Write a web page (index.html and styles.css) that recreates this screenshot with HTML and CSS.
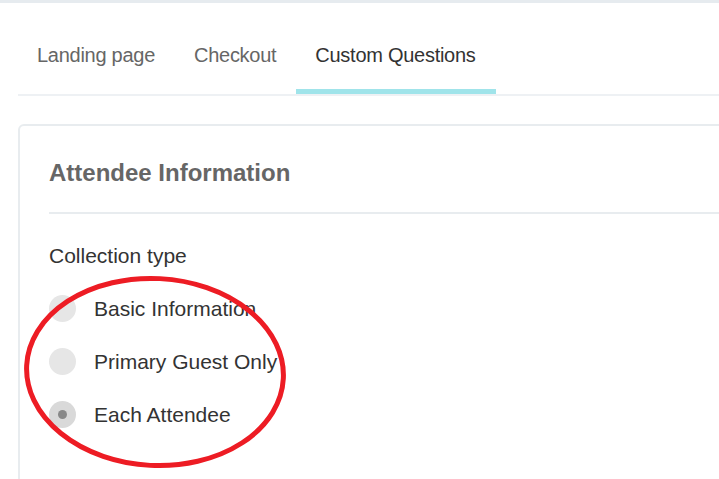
FILE: index.html
```html
<!DOCTYPE html>
<html>
<head>
<meta charset="utf-8">
<link rel="stylesheet" href="styles.css">
</head>
<body>
<div class="topbar"></div>
<div class="page">
  <nav class="tabs">
    <a class="tab">Landing page</a>
    <a class="tab">Checkout</a>
    <a class="tab active">Custom Questions</a>
  </nav>
  <section class="card">
    <h2 class="card-title">Attendee Information</h2>
    <div class="card-body">
      <div class="field-label">Collection type</div>
      <div class="radios">
        <label class="radio"><span class="dot"></span><span class="radio-text">Basic Information</span></label>
        <label class="radio"><span class="dot"></span><span class="radio-text">Primary Guest Only</span></label>
        <label class="radio checked"><span class="dot"></span><span class="radio-text">Each Attendee</span></label>
      </div>
    </div>
  </section>
</div>
<svg class="annotation" width="290" height="210" viewBox="0 0 290 210">
  <ellipse cx="145" cy="105" rx="128.5" ry="93.5" fill="none" stroke="#ed1c24" stroke-width="5"/>
</svg>
</body>
</html>
```
FILE: styles.css
```css
html, body {
  margin: 0;
  padding: 0;
  overflow: hidden;
  background: #ffffff;
  font-family: "Liberation Sans", Arial, sans-serif;
}
body {
  position: relative;
  width: 719px;
  height: 479px;
}
.topbar {
  height: 3px;
  background: #e6ebef;
}
.page {
  margin-left: 18px;
  width: 760px;
}
.tabs {
  display: flex;
  border-bottom: 2px solid #eef1f4;
  padding-left: 0;
}
.tab {
  display: block;
  padding: 41px 20px 22px 19px;
  font-size: 20px;
  line-height: 23px;
  color: #666666;
  border-bottom: 5px solid transparent;
  letter-spacing: -0.27px;
}
.tab.active {
  color: #333333;
  border-bottom-color: #a0e4ea;
}
.card {
  margin-top: 28px;
  border: 2px solid #e8ecef;
  border-radius: 6px;
  padding: 33px 0 40px 29px;
  height: 400px;
}
.card-title {
  margin: 0;
  padding-bottom: 25px;
  border-bottom: 2px solid #e8ecef;
  font-size: 24px;
  line-height: 28px;
  font-weight: bold;
  color: #666666;
}
.card-body {
  padding-top: 30px;
}
.field-label {
  font-size: 21px;
  line-height: 24px;
  color: #333333;
}
.radios {
  display: flex;
  flex-direction: column;
  gap: 26px;
  padding-top: 27px;
}
.radio {
  display: flex;
  align-items: center;
  gap: 18px;
  font-size: 21px;
  line-height: 27px;
  color: #333333;
}
.dot {
  width: 27px;
  height: 27px;
  border-radius: 50%;
  background: #e6e6e6;
  display: flex;
  align-items: center;
  justify-content: center;
  flex: none;
}
.radio.checked .dot {
  background: #d9d9d9;
}
.radio.checked .dot::after {
  content: "";
  width: 9px;
  height: 9px;
  border-radius: 50%;
  background: #888888;
}
.annotation {
  position: absolute;
  left: 10px;
  top: 267px;
  transform: rotate(3deg);
}
```
